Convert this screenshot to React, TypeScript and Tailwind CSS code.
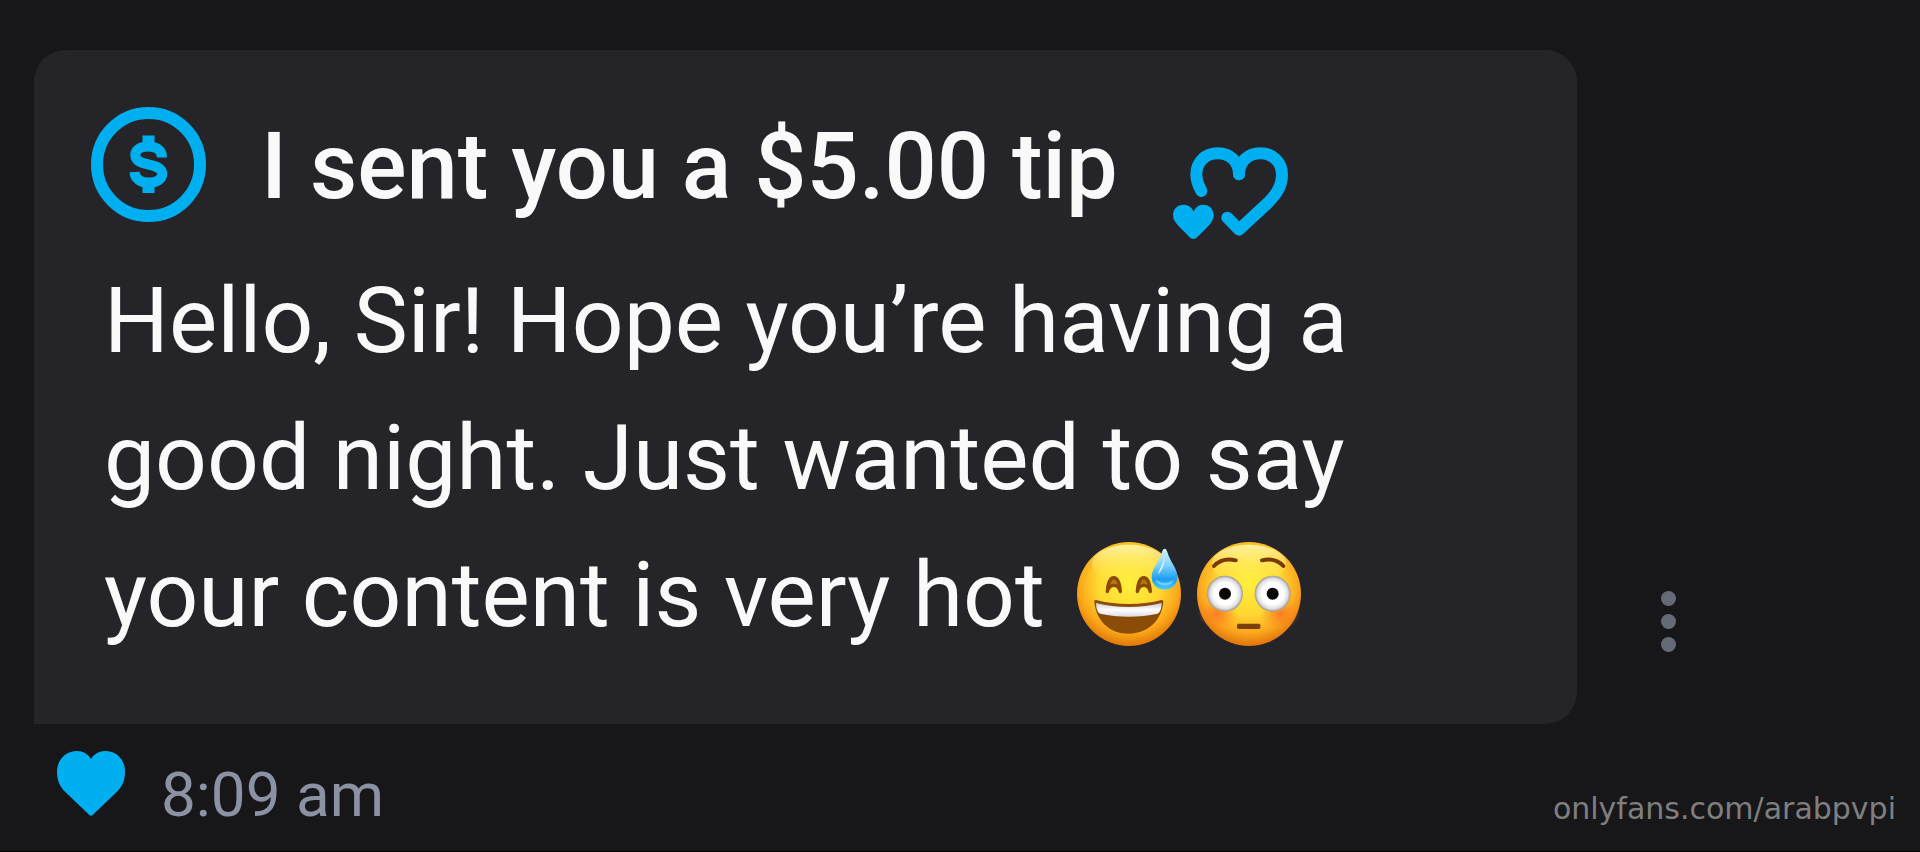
import type { ReactNode } from 'react';

const TipIcon = () => (
  <svg className="size-[115px] shrink-0" viewBox="0 0 115 115" fill="none" aria-hidden="true">
    <circle cx="57.5" cy="57.5" r="51.5" stroke="#00aff0" strokeWidth="12" />
    <path
      d="M71 50.5C71 43.5 66 39.4 57.5 39.4C49 39.4 44.3 43 44.3 48C44.3 54 50 55.8 57.5 57.5C65 59.2 71.2 61 71.2 67C71.2 72 66 75.6 57.5 75.6C49 75.6 43.8 71.5 43.5 65"
      stroke="#00aff0"
      strokeWidth="10"
    />
    <path d="M51.5 28.5h12v9h-12zM51.5 77h12v9h-12z" fill="#00aff0" />
  </svg>
);

const HeartsIcon = () => (
  <svg className="h-[92px] w-[115px] shrink-0" viewBox="93 79 345 276" aria-hidden="true">
    <g fill="none" stroke="#00aff0" strokeWidth="36" strokeLinecap="round" strokeLinejoin="round">
      <path d="M178 211C168 192 163 178 163 162C163 124 190 98 227 98C263 98 291 122 291 161" />
      <path d="M291 161C291 122 319 98 355 98C392 98 420 124 420 162C420 200 398 227 372 252L291 327L256 291" />
    </g>
    <path
      fill="#00aff0"
      d="M154 355C150 355 146 353 143 350L112 318C100 306 93 297 93 284C93 265 106 252 124 252C139 252 151 260 155 274C159 260 170 252 184 252C202 252 215 265 215 284C215 297 208 306 197 318L165 350C162 353 158 355 154 355Z"
    />
  </svg>
);

const LikeIcon = () => (
  <svg className="h-[65px] w-[68px]" viewBox="112 152 204 195" aria-hidden="true">
    <path
      fill="#00aff0"
      d="M214 346C211 346 208 344 206 341L137 275C120 258 112 240 112 214C112 178 138 152 172 152C190 152 206 162 214 176C222 162 238 152 257 152C291 152 316 178 316 214C316 240 308 258 291 275L222 341C220 344 217 346 214 346Z"
    />
  </svg>
);

const Emoji = ({ label, children }: { label: string; children: ReactNode }) => (
  <svg
    className="inline-block size-[104px] overflow-visible"
    viewBox="0 0 312 312"
    role="img"
    aria-label={label}
  >
    {children}
  </svg>
);

const SweatSmile = () => (
  <Emoji label="grinning face with sweat">
    <defs>
      <radialGradient id="smile-face" cx="0.5" cy="0.4" r="0.6">
        <stop offset="0" stopColor="#fff03c" />
        <stop offset="0.5" stopColor="#ffd932" />
        <stop offset="0.78" stopColor="#fcab1b" />
        <stop offset="1" stopColor="#e27808" />
      </radialGradient>
      <linearGradient id="smile-shine" x1="0" y1="0" x2="0" y2="1">
        <stop offset="0" stopColor="#fff6ae" stopOpacity="0.9" />
        <stop offset="1" stopColor="#fff04a" stopOpacity="0" />
      </linearGradient>
      <linearGradient id="smile-teeth" x1="0" y1="0" x2="0" y2="1">
        <stop offset="0" stopColor="#c9c9d4" />
        <stop offset="0.5" stopColor="#ffffff" />
        <stop offset="1" stopColor="#dcdce4" />
      </linearGradient>
      <linearGradient id="smile-drop" x1="0" y1="0" x2="0" y2="1">
        <stop offset="0" stopColor="#d9f5ff" />
        <stop offset="0.4" stopColor="#7fd3fb" />
        <stop offset="0.75" stopColor="#1b9df2" />
        <stop offset="1" stopColor="#53c8fb" />
      </linearGradient>
    </defs>
    <circle cx="156" cy="156" r="156" fill="url(#smile-face)" />
    <ellipse cx="156" cy="66" rx="112" ry="58" fill="url(#smile-shine)" />
    <g fill="#b8730d" stroke="#8a4a05" strokeWidth="10" strokeLinecap="round" strokeLinejoin="round">
      <path d="M91 149C93 120 101 107 110 107C120 107 128 120 130 149C123 124 98 124 91 149Z" />
      <path d="M181 149C183 120 191 107 200 107C210 107 218 120 220 149C213 124 188 124 181 149Z" />
    </g>
    <path
      d="M52 179C51 175 55 173 60 175C120 190 192 190 250 175C256 173 260 175 259 180C254 236 212 275 155 275C98 275 57 236 52 179Z"
      fill="#8b4c08"
    />
    <path
      d="M57 183C120 199 190 199 254 183C253 202 249 212 241 215C190 227 122 227 70 215C62 212 58 202 57 183Z"
      fill="url(#smile-teeth)"
    />
    <path
      d="M263 20C267 20 269 24 271 30C280 62 301 77 301 105C301 128 285 143 263 143C241 143 224 128 224 105C224 77 247 62 255 30C257 24 259 20 263 20Z"
      fill="url(#smile-drop)"
    />
    <path d="M236 112C240 135 284 139 291 111C279 127 249 127 236 112Z" fill="#7de0ff" opacity="0.75" />
    <path d="M262 38C262 67 247 77 243 97C255 86 265 66 262 38Z" fill="#ffffff" opacity="0.75" />
  </Emoji>
);

const Flushed = () => (
  <Emoji label="flushed face">
    <defs>
      <radialGradient id="flush-face" cx="0.5" cy="0.4" r="0.6">
        <stop offset="0" stopColor="#fff03c" />
        <stop offset="0.5" stopColor="#ffd832" />
        <stop offset="0.78" stopColor="#fca91f" />
        <stop offset="1" stopColor="#e2740a" />
      </radialGradient>
      <linearGradient id="flush-shine" x1="0" y1="0" x2="0" y2="1">
        <stop offset="0" stopColor="#fff6ae" stopOpacity="0.9" />
        <stop offset="1" stopColor="#fff04a" stopOpacity="0" />
      </linearGradient>
      <radialGradient id="flush-cheek">
        <stop offset="0" stopColor="#fb6a22" stopOpacity="0.75" />
        <stop offset="1" stopColor="#fb7a22" stopOpacity="0" />
      </radialGradient>
      <radialGradient id="flush-eye">
        <stop offset="0.6" stopColor="#ffffff" />
        <stop offset="0.84" stopColor="#e0e0e5" />
        <stop offset="1" stopColor="#9c968b" />
      </radialGradient>
    </defs>
    <circle cx="156" cy="156" r="156" fill="url(#flush-face)" />
    <ellipse cx="156" cy="66" rx="112" ry="58" fill="url(#flush-shine)" />
    <ellipse cx="62" cy="216" rx="60" ry="46" fill="url(#flush-cheek)" />
    <ellipse cx="250" cy="216" rx="60" ry="46" fill="url(#flush-cheek)" />
    <circle cx="84" cy="155" r="54" fill="url(#flush-eye)" />
    <circle cx="227" cy="155" r="54" fill="url(#flush-eye)" />
    <circle cx="84" cy="155" r="18" fill="#0c0705" />
    <circle cx="227" cy="155" r="18" fill="#0c0705" />
    <path
      d="M51 72C67 55 90 49 116 55M195 55C220 49 243 55 259 72"
      fill="none"
      stroke="#7b3a05"
      strokeWidth="12"
      strokeLinecap="round"
    />
    <rect x="120" y="245" width="70" height="16" rx="5" fill="#7b3f0a" />
  </Emoji>
);

export default function App() {
  return (
    <main className="flex min-h-screen flex-col border-b border-black bg-[#17171a] pt-[50px] font-[Roboto,sans-serif] text-[#f9f9fa]">
      <div className="flex items-end pl-[34px]">
        <article className="flex-1 rounded-[32px] rounded-bl-none bg-[#252429] pt-[57px] pb-[60px]">
          <header className="flex items-start gap-[55px] px-[57px]">
            <TipIcon />
            <h1 className="text-[92px] leading-[120px] font-medium">I sent you a $5.00 tip</h1>
            <div className="pt-10">
              <HeartsIcon />
            </div>
          </header>
          <p className="px-[70px] pt-[14px] text-[91px] leading-[137px]">
            Hello, Sir! Hope you’re having a good night. Just wanted to say your content is very hot{' '}
            <span className="ml-[10px] inline-flex gap-4 align-[-20px]">
              <SweatSmile />
              <Flushed />
            </span>
          </p>
        </article>
        <button
          type="button"
          aria-label="Message options"
          className="mr-[244px] mb-[72px] ml-[84px] flex flex-col gap-2 text-[#646b77]"
        >
          <span className="size-[15px] rounded-full bg-current" />
          <span className="size-[15px] rounded-full bg-current" />
          <span className="size-[15px] rounded-full bg-current" />
        </button>
      </div>
      <footer className="flex flex-1 items-start justify-between pt-[27px] pr-6 pl-[57px]">
        <div className="flex items-start gap-9">
          <button type="button" aria-label="Like">
            <LikeIcon />
          </button>
          <time className="pt-2 text-[62px] leading-[72px] text-[#8a92a3]">8:09 am</time>
        </div>
        <a href="#" className="pt-10 font-['DejaVu_Sans',sans-serif] text-[30px] leading-9 text-[#7f7f80]">
          onlyfans.com/arabpvpi
        </a>
      </footer>
    </main>
  );
}
